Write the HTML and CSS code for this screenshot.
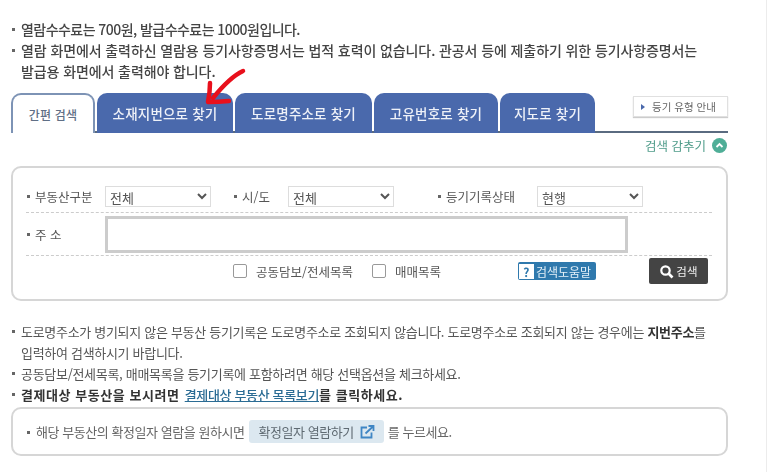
FILE: index.html
```html
<!DOCTYPE html>
<html lang="ko">
  <head>
    <meta charset="UTF-8" />
    <meta name="viewport" content="width=device-width, initial-scale=1.0" />
    <title>등기사항증명서 열람</title>
    <link rel="stylesheet" href="styles.css">
  </head>
  <body>
    <div class="page">
      <ul class="notes top-notes">
        <li class="fee-line">열람수수료는 700원, 발급수수료는 1000원입니다.</li>
        <li>열람 화면에서 출력하신 열람용 등기사항증명서는 법적 효력이 없습니다. 관공서 등에 제출하기 위한 등기사항증명서는<br />발급용 화면에서 출력해야 합니다.</li>
      </ul>

      <div class="tab-bar">
        <a class="tab tab-on tab-1">간편 검색</a>
        <a class="tab tab-2">소재지번으로 찾기</a>
        <a class="tab tab-3">도로명주소로 찾기</a>
        <a class="tab tab-4">고유번호로 찾기</a>
        <a class="tab tab-5">지도로 찾기</a>
        <a class="guide-btn"><i></i>등기 유형 안내</a>
      </div>

      <div class="hide-row">
        <span>검색 감추기</span>
        <svg width="15" height="15" viewBox="0 0 15 15">
          <circle cx="7.5" cy="7.5" r="7.5" fill="#4fae97" />
          <path d="M4.5 9 L7.5 6 L10.5 9" fill="none" stroke="#fff" stroke-width="1.8" />
        </svg>
      </div>

      <form class="search-box">
        <div class="row row-1">
          <label class="lbl lbl-type">부동산구분</label>
          <select><option>전체</option></select>
          <label class="lbl lbl-city">시/도</label>
          <select><option>전체</option></select>
          <label class="lbl lbl-state">등기기록상태</label>
          <select><option>현행</option></select>
        </div>
        <div class="row row-2">
          <label class="lbl lbl-addr">주 소</label>
          <input type="text" class="addr" />
        </div>
        <div class="row-3">
          <label class="check check-1"><input type="checkbox" />공동담보/전세목록</label>
          <label class="check check-2"><input type="checkbox" />매매목록</label>
          <a class="help-btn"><b>?</b>검색도움말</a>
          <button type="button" class="search-btn">
            <svg width="15" height="15" viewBox="0 0 15 15">
              <circle cx="6.5" cy="6.5" r="4.2" fill="none" stroke="#fff" stroke-width="2.2" />
              <path d="M9.5 9.5 L13.5 13.5" stroke="#fff" stroke-width="2.6" />
            </svg>검색
          </button>
        </div>
      </form>

      <ul class="notes bottom-notes">
        <li>도로명주소가 병기되지 않은 부동산 등기기록은 도로명주소로 조회되지 않습니다. 도로명주소로 조회되지 않는 경우에는 <strong>지번주소</strong>를<br />입력하여 검색하시기 바랍니다.</li>
        <li>공동담보/전세목록, 매매목록을 등기기록에 포함하려면 해당 선택옵션을 체크하세요.</li>
        <li><strong class="pay-line">결제대상 부동산을 보시려면 <a class="pay-link">결제대상 부동산 목록보기</a>를 클릭하세요.</strong></li>
      </ul>

      <div class="confirm-box">
        <span>해당 부동산의 확정일자 열람을 원하시면</span>
        <a class="confirm-btn">확정일자 열람하기
          <svg width="15" height="14" viewBox="0 0 15 14">
            <path d="M7 2.5 H1.5 V12.5 H11.5 V7.5" fill="none" stroke="#3f86c4" stroke-width="1.8" />
            <path d="M5.5 8.5 L13 1.5 M8.5 1 H13.5 V6" fill="none" stroke="#3f86c4" stroke-width="1.8" />
          </svg>
        </a>
        <span>를 누르세요.</span>
      </div>

      <svg class="red-arrow" width="50" height="50" viewBox="0 0 50 50">
        <path d="M43 5 Q30 11 13 32" fill="none" stroke="#e8101c" stroke-width="4.5" stroke-linecap="round" />
        <path d="M10 17 Q10 26 8 36 Q18 36 29 35" fill="none" stroke="#e8101c" stroke-width="4.5" stroke-linecap="round" stroke-linejoin="round" />
      </svg>
    </div>
  </body>
</html>
```

FILE: styles.css
```css
* {
  box-sizing: border-box;
  font-family: "Noto Sans CJK KR", "Noto Sans", sans-serif;
}

body {
  margin: 0;
  background: #fff;
}

.page {
  position: relative;
  width: 767px;
  height: 472px;
  padding: 19px 0 0 11px;
  border-right: 1px solid #ececec;
  overflow: hidden;
  filter: blur(0.35px);
  color: #4a4a4a;
}

ul.notes {
  list-style: none;
  margin: 0;
  padding: 0;
  font-size: 13px;
  line-height: 21px;
  letter-spacing: -0.3px;
}

.notes li {
  position: relative;
  padding-left: 10px;
  width: 717px;
}

.notes li::before {
  content: "";
  position: absolute;
  left: 1px;
  top: 9px;
  width: 3px;
  height: 3px;
  background: #666;
}

ul.top-notes {
  font-size: 14px;
  letter-spacing: -0.1px;
  font-weight: 500;
  color: #444;
  height: 74px;
}

.top-notes .fee-line {
  letter-spacing: -0.55px;
}

/* tabs */
.tab-bar {
  display: flex;
  height: 40px;
  width: 717px;
  border-bottom: 2px solid #5a6b80;
  gap: 2px;
  position: relative;
}

.tab {
  flex: none;
  height: 40px;
  border-radius: 10px 10px 0 0;
  background: #4a69ac;
  color: #eef1f8;
  font-size: 13.5px;
  font-weight: 500;
  letter-spacing: 0.2px;
  display: flex;
  align-items: center;
  justify-content: center;
}

.tab-on {
  background: #fff;
  color: #5f6f86;
  border: 2px solid #7d93b5;
  border-bottom: none;
  font-size: 12px;
  position: relative;
  z-index: 1;
  height: 40px;
}

.tab-1 { width: 84px; }
.tab-2 { width: 136px; }
.tab-3 { width: 137px; }
.tab-4 { width: 124px; }
.tab-5 { width: 95px; }

.guide-btn {
  flex: none;
  margin-left: 36px;
  margin-top: 3px;
  width: 95px;
  height: 21px;
  border: 1px solid #e0e0e0;
  box-shadow: 0 1px 1px #ccc;
  font-size: 10.5px;
  color: #666;
  display: flex;
  align-items: center;
  white-space: nowrap;
}

.guide-btn i {
  width: 0;
  height: 0;
  margin: 0 7px 0 7px;
  border-left: 4px solid #4a69ac;
  border-top: 3px solid transparent;
  border-bottom: 3px solid transparent;
}

.hide-row {
  display: flex;
  justify-content: flex-end;
  align-items: center;
  gap: 6px;
  width: 716px;
  height: 33px;
  padding-bottom: 9px;
  font-size: 12.5px;
  color: #4f9c8a;
}

/* search form */
.search-box {
  width: 717px;
  height: 135px;
  border: 2px solid #d6d6d6;
  border-radius: 10px;
  padding: 18px 14px 0 13px;
  font-size: 12.5px;
  color: #555;
}

.row {
  display: flex;
  align-items: center;
  border-bottom: 1px dashed #ccc;
}

.row-1 {
  height: 27px;
  padding-bottom: 5px;
}

.row-2 {
  height: 43px;
}

.lbl {
  position: relative;
  padding-left: 9px;
  white-space: nowrap;
}

.lbl::before {
  content: "";
  position: absolute;
  left: 1px;
  top: 8px;
  width: 3px;
  height: 3px;
  background: #666;
}

.lbl-type { width: 79px; }
.lbl-city { width: 55px; margin-left: 22px; }
.lbl-state { width: 100px; margin-left: 43px; }
.lbl-addr { width: 79px; }

select {
  width: 106px;
  height: 21px;
  border: 1px solid #ddd;
  background: #fff;
  font-size: 13px;
  color: #555;
  padding-left: 0;
}

.addr {
  width: 523px;
  height: 37px;
  border: 3px solid #ccc;
  background: #fff;
}

.row-3 {
  display: flex;
  align-items: center;
  height: 30px;
}

.check {
  display: flex;
  align-items: center;
  gap: 9px;
  white-space: nowrap;
}

.check input {
  width: 14px;
  height: 14px;
  margin: 0;
  appearance: none;
  border: 1px solid #999;
  border-radius: 2px;
  background: #fff;
}

.check-1 { margin-left: 207px; }
.check-2 { margin-left: 19px; }

.help-btn {
  display: flex;
  align-items: center;
  gap: 2px;
  margin-left: 77px;
  width: 78px;
  height: 18px;
  padding-left: 1px;
  border-radius: 2px;
  background: #2f79ad;
  color: #e4f0f8;
  font-size: 12px;
  white-space: nowrap;
}

.help-btn b {
  width: 15px;
  height: 15px;
  background: #fff;
  color: #2f79ad;
  font-size: 12px;
  line-height: 15px;
  text-align: center;
}

.search-btn {
  display: flex;
  align-items: center;
  justify-content: center;
  gap: 2px;
  margin-left: 53px;
  width: 59px;
  height: 26px;
  padding: 0;
  border: none;
  border-radius: 2px;
  background: #444;
  color: #eee;
  font-size: 11.5px;
}

/* bottom notes */
ul.bottom-notes {
  margin-top: 20px;
  color: #555;
}

.bottom-notes strong {
  color: #333;
}

.pay-line {
  letter-spacing: 0.55px;
}

.pay-link {
  color: #2b6c94;
  text-decoration: underline;
  font-weight: 500;
  letter-spacing: -0.35px;
  margin-left: 1px;
}

.confirm-box {
  display: flex;
  align-items: center;
  width: 717px;
  height: 49px;
  margin-top: 2px;
  padding-left: 14px;
  border: 2px solid #d6d6d6;
  border-radius: 10px;
  font-size: 13px;
  letter-spacing: -0.45px;
  color: #666;
  white-space: nowrap;
}

.confirm-box > span:first-child {
  position: relative;
  padding-left: 9px;
}

.confirm-box > span:first-child::before {
  content: "";
  position: absolute;
  left: 0;
  top: 9px;
  width: 3px;
  height: 3px;
  background: #666;
}

.confirm-btn {
  display: flex;
  align-items: center;
  gap: 6px;
  margin: 0 4px 0 5px;
  height: 23px;
  padding: 0 9px;
  border-radius: 3px;
  background: #dce8f0;
  color: #5f6a72;
}

.red-arrow {
  position: absolute;
  left: 200px;
  top: 66px;
}
```
